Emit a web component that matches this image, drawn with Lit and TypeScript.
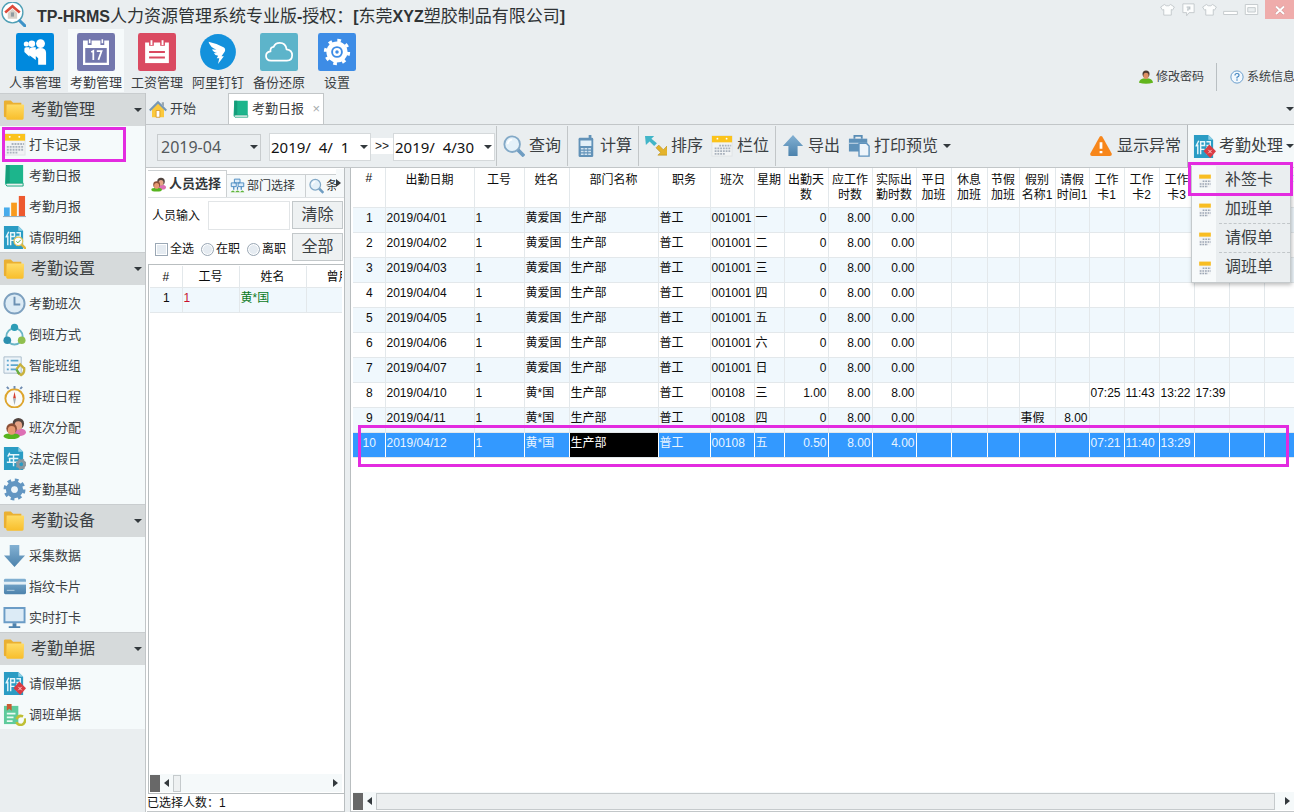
import { LitElement, html, css, svg, nothing } from "lit";
import { customElement, state, property } from "lit/decorators.js";
import { classMap } from "lit/directives/class-map.js";

const calendar = svg`
  <rect x="1" y="1" width="22" height="22" fill="#f1f3f4" stroke="#dfe3e5"/>
  <rect x="1" y="1" width="22" height="7" fill="#fbc31b"/>
  <circle cx="7" cy="4" r="1" fill="#fff"/><circle cx="17" cy="4" r="1" fill="#fff"/>
  <path d="M9 11.5h13M4 14.500h18M4 17.500h18M4 20.500h11" stroke="#a9b2bd" stroke-width="2" stroke-dasharray="2 1"/>`;

const paper = svg`
  <path d="M1 0h15l5 5v19H1z" fill="#2a9cc4"/><path d="M16 0l5 5h-5z" fill="#8fd0e6"/>`;

const holiday = svg`
  <path d="M6 6L3 12M5 10v10M8 7h4v4H8zM8 11v9M8 15h4M14 7h4v4h-4M14 13h4l-4 7M14 14l4 6" stroke="#e6f6fb" stroke-width="1.500" fill="none"/>`;

const people = svg`
  <ellipse cx="17" cy="17" rx="7" ry="4" fill="#dd6fb4"/>
  <circle cx="16" cy="8" r="6" fill="#51443f"/><ellipse cx="16" cy="10" rx="4" ry="4.500" fill="#e6a487"/>
  <ellipse cx="9" cy="21" rx="8.500" ry="3" fill="#57b41f"/>
  <circle cx="9" cy="13" r="5.500" fill="#8b4f36"/><ellipse cx="9" cy="15" rx="4" ry="4.500" fill="#e79a72"/>`;

const icons: Record<string, unknown> = {
  logo: svg`
    <circle cx="11" cy="10" r="10" fill="#fff" stroke="#4f9fb5" stroke-width="1.300"/>
    <path d="M18 18l5 5" stroke="#3e93c8" stroke-width="3" stroke-linecap="round"/>
    <path d="M4 10l7-6 7 6" fill="none" stroke="#dd4a3a" stroke-width="2.500"/>
    <path d="M6.500 10.500l4.500-4 4.500 4V16h-9z" fill="#d7d1c8"/><path d="M9.500 10h3v4h-3z" fill="#8f9aa0"/>`,
  staff: svg`
    <rect width="24" height="24" rx="1.500" fill="#0089dd"/>
    <g fill="#fff"><circle cx="6.500" cy="7" r="1.600"/><circle cx="10" cy="6.800" r="2.100"/><circle cx="15.500" cy="6.700" r="2.800"/>
    <path d="M5.300 10q0-1 1.200-1h2v6l-3.200-3zM8.500 11q0-2 2-2h2v8l-4-3zM12.300 12q0-2.500 3-2.500 3.700 0 3.700 3V20h-5v-4l-1.700-1.600z"/></g>`,
  attendance: svg`
    <rect width="24" height="24" rx="1.500" fill="#7377ad"/>
    <path d="M4.500 5.500h15v14h-15z" fill="none" stroke="#fff" stroke-width="1.400"/>
    <path d="M4.500 5.500h15v4h-15z" fill="#fff"/>
    <path d="M8 4v3.500M16 4v3.500" stroke="#7377ad" stroke-width="2.400"/><path d="M8 4v2.500M16 4v2.500" stroke="#fff"/>
    <path d="M9 12l1.300-.700V17M12.500 11.500h3L13.500 17" stroke="#fff" fill="none" stroke-width="1.100"/>`,
  payroll: svg`
    <rect width="24" height="24" rx="1.500" fill="#da4a61"/>
    <path d="M4.500 6h15v13h-15z" fill="#fff"/>
    <path d="M8.500 4v4M15.500 4v4" stroke="#da4a61" stroke-width="3"/>
    <path d="M8.500 4.500v3M15.500 4.500v3" stroke="#fff" stroke-width="1.200"/>
    <path d="M7 12h10M7 15.500h10" stroke="#da4a61" stroke-width="1.200"/>`,
  ding: svg`
    <circle cx="12" cy="12" r="11.300" fill="#1391dc"/>
    <path d="M6 5.500q5 1 9.500 3.500 1.500 1 .8 2.700l-2.100 3h1.500l-3.700 4.800.8-3.500h-1.600l.9-1.600q-2-.2-2.700-1.600l2-.1q-2.700-.8-3.100-2.500l2.700.3Q7 9 6 5.500z" fill="#fff"/>`,
  backup: svg`
    <rect width="24" height="24" rx="1.500" fill="#5db4ca"/>
    <path d="M7 17.500q-3.200-.2-3.200-3 0-2.500 2.800-2.900-.2-2.600 2-2.800Q9.700 6.300 12.500 6.300q3.700 0 4.300 4 3.500.4 3.500 3.700 0 3.300-3.300 3.500z" fill="none" stroke="#fff" stroke-width="1.100"/>`,
  settings: svg`
    <rect width="24" height="24" rx="1.500" fill="#3d8ce6"/>
    <circle cx="12" cy="12" r="6.700" fill="#fff"/>
    <circle cx="12" cy="12" r="7.300" fill="none" stroke="#fff" stroke-width="2" stroke-dasharray="2.300 3.430"/>
    <circle cx="12" cy="12" r="3.100" fill="none" stroke="#3d8ce6" stroke-width="1.200"/><circle cx="12" cy="12" r="1.100" fill="#3d8ce6"/>`,
  folder: svg`
    <path d="M1 3q0-1.500 1.500-1.500h6L11 4h9v16H2.500Q1 20 1 18.500z" fill="#eab032"/>
    <path d="M4 6h18q1 0 1 1l-.5 14q0 1.500-1.500 1.500H5Q3.500 22.500 3.500 21z" fill="url(#gold)"/>`,
  home: svg`
    <path d="M4 12l8-8 8 8v11H4z" fill="#fbc93d"/><path d="M1 14L12 3l11 11" fill="none" stroke="#7898b5" stroke-width="3"/>
    <path d="M17 3h3v6l-3-3z" fill="#9aa7b1"/><path d="M9.500 14h5v9h-5z" fill="#fff" stroke="#d18d18"/>`,
  calendar,
  date: svg`
    <path d="M2 2h20v21H2z" fill="#f1f3f4"/><path d="M2 1h20v7H2z" fill="#f8bd22"/>
    <path d="M8 12.500h14M3 17h19M3 21.500h14" stroke="#9da7b5" stroke-width="2.500" stroke-dasharray="3 1.500"/>`,
  book: svg`
    <path d="M3 1h18v19H5q-3 0-3 2z" fill="#1cb58c"/><path d="M3 1h4v19l-4 1z" fill="#149d7a"/>
    <path d="M4 20h17v3H4q-2-1.500 0-3z" fill="#e8f2ee" stroke="#18a47e"/>`,
  chart: svg`
    <path d="M1 13h6v9H1z" fill="#48aceb"/><path d="M8.500 8h6v14h-6z" fill="#f99a1d"/><path d="M16.500 1H23v21h-6.500z" fill="#ed592e"/>
    <path d="M0 22.500h24" stroke="#8fa6b5"/>`,
  leave: svg`${paper}${holiday}
    <circle cx="16" cy="16" r="4.500" fill="#fff" stroke="#e3c45a" stroke-width="1.300"/><path d="M14 16l1.500 1.500 3-3" stroke="#4cae4c" fill="none"/><path d="M19.500 19.500L24 24" stroke="#dfb83d" stroke-width="2.500"/>`,
  clock: svg`
    <circle cx="12" cy="12" r="10.500" fill="#dcebf5" stroke="#7da0bf" stroke-width="2"/><path d="M12 5v8h6" fill="none" stroke="#6c91b3" stroke-width="2"/>`,
  cycle: svg`
    <circle cx="12" cy="14" r="8.500" fill="none" stroke="#69b5c6" stroke-width="2"/>
    <circle cx="12" cy="4.500" r="3.800" fill="#2c9cb6"/><circle cx="4.500" cy="18" r="4" fill="#2c8fae"/><circle cx="19.500" cy="18" r="4" fill="#8fbf4f"/>`,
  group: svg`
    <path d="M1 3h18v17H1z" fill="#edf4f9" stroke="#a9bccb"/><path d="M4 7h2M4 11.500h2M4 16h2M8 7h8M8 11.500h8M8 16h6" stroke="#5ea6cf" stroke-width="1.800"/>
    <path d="M14 16l4-5 4 4M22 14q1 6-3 8l-4-3" fill="none" stroke="#c8b23e" stroke-width="2.400"/><path d="M14 16l3 5" stroke="#67ad45" stroke-width="2.400"/>`,
  compass: svg`
    <circle cx="12" cy="14" r="9.500" fill="#f9fafa" stroke="#dda52d" stroke-width="2"/><path d="M12 1v3M4 2l2 2M20 2l-2 2" stroke="#6e8bb0" stroke-width="2"/>
    <path d="M12 7l1.500 7h-3z" fill="#d53c2f"/><path d="M12 21l1.500-7h-3z" fill="#a5aeb5"/>`,
  people,
  year: svg`${paper}
    <path d="M7 6l-2 4M6 8h11M6 12h10M4 16h14M11 8v12M7 12v4" stroke="#e6f6fb" stroke-width="1.500" fill="none"/>
    <circle cx="19" cy="18" r="3.500" fill="none" stroke="#8b979e" stroke-width="3"/><circle cx="19" cy="18" r="5" fill="none" stroke="#8b979e" stroke-width="1.500" stroke-dasharray="2 2"/>`,
  gear: svg`
    <circle cx="12" cy="12" r="6" fill="none" stroke="#6296c2" stroke-width="6"/>
    <circle cx="12" cy="12" r="9.700" fill="none" stroke="#6296c2" stroke-width="3.500" stroke-dasharray="3.800 3.820"/><circle cx="12" cy="12" r="3.500" fill="#edf5fa"/>`,
  down: svg`<path d="M7 1h10v11h6L12 24 1 12h6z" fill="url(#steel)"/>`,
  up: svg`<path d="M7 23h10V12h6L12 0 1 12h6z" fill="url(#steel)"/>`,
  card: svg`
    <rect x="1" y="4" width="23" height="16" rx="1.500" fill="url(#steel)"/><path d="M1 7h23v3H1z" fill="#e4eff6"/><path d="M4 16h8" stroke="#b5d0e2"/>`,
  monitor: svg`
    <path d="M1.500 2h21v15h-21z" fill="#dcebf6" stroke="#6b9cc6" stroke-width="2"/><path d="M10 18h4v3h4v2H6v-2h4z" fill="#4f83ae"/>`,
  leaveForm: svg`${paper}${holiday}
    <path d="M17 10l7 7-6 7-7-7z" fill="#da3b43"/><path d="M16 15.500l3.500 3.500M19.500 15.500L16 19" stroke="#fbd5d6"/>`,
  shiftForm: svg`
    <path d="M1 3h15v19H1z" fill="#5ecb9c"/><path d="M4 1h5v7L6.500 6 4 8z" fill="#c95b31"/><path d="M4 11h9M4 15h7M4 19h6" stroke="#e9fbf2" stroke-width="1.800"/>
    <path d="M14 17q2-5 7-3M23 16q1 5-4 7-4 0-5-3" fill="none" stroke="#bfbf35" stroke-width="2.600"/>`,
  search: svg`
    <path d="M16 16l7 7" stroke="#6f9dc2" stroke-width="4"/><circle cx="10" cy="10" r="8.500" fill="#e4f1f9" stroke="#83a9c7" stroke-width="2"/>
    <path d="M5 10q1-5 5-5" stroke="#fff" stroke-width="2" fill="none"/>`,
  phone: svg`
    <rect x="5" y="3" width="16" height="21" rx="1.500" fill="#6292b8"/><path d="M16 0h3v4h-3z" fill="#6292b8"/><path d="M7 6h12v6H7z" fill="#e3f0f8"/>
    <path d="M7.500 15h12M7.500 18h12M7.500 21h12" stroke="#d2e3ef" stroke-width="1.500" stroke-dasharray="3 1"/>`,
  sort: svg`
    <path d="M0 1h10L7 4l6 5-3 3-5-5-4 4z" fill="#42b5c8"/><path d="M25 22H14l3-3-5-5 3-3 5 5 4-4z" fill="#e4b32b" stroke="#b38b1d" stroke-width=".6"/>`,
  print: svg`
    <path d="M7 4V1h8v3" fill="none" stroke="#5a8db5" stroke-width="2"/><path d="M1 4h20v14H1z" fill="#5e91b9"/><path d="M1 9h20" stroke="#d5e4ef"/>
    <path d="M12 9h8l3 3v11H12z" fill="#eef5fb" stroke="#5f93be" stroke-width="1.500"/>`,
  warn: svg`
    <path d="M10.500 2q1.500-2 3 0l10 18q1 3-2 3h-19q-3 0-2-3z" fill="#f7861b"/><path d="M12 8v7M12 17.500v2.500" stroke="#fff" stroke-width="3"/>`,
  depart: svg`
    <path d="M7 1h9v6H7zM2 7h8v6H2zM13 7h9v6h-9z" fill="#dcebf8" stroke="#4c8bc1" stroke-width="1.500"/>
    <path d="M6 13v5M12 13v5M18 13v5" stroke="#4c8bc1" stroke-width="2"/><path d="M1 22q4-6 7 0zM8 22q4-6 8 0zM16 22q4-6 7 0z" fill="#5db53a"/>`,
  user: svg`
    <path d="M0 22q0-8 12-8t12 8q-12 3-24 0z" fill="#62b51c"/><circle cx="12" cy="7" r="6" fill="#4d3a31"/><ellipse cx="12" cy="10" rx="4.500" ry="5.500" fill="#dd9064"/>`,
  help: svg`
    <circle cx="12" cy="12" r="10.500" fill="#f2f8fd" stroke="#5a94c8" stroke-width="1.500"/><path d="M8.500 9.500q0-3.500 3.500-3.500t3.500 3q0 2-3.500 3.500v2M12 16v2.500" fill="none" stroke="#4485bf" stroke-width="2"/>`,
  shirt: svg`<path d="M7 4l3 2h4l3-2 6 4-3 5-2-1v9H6v-9l-2 1-3-5z" fill="#fcfdfd" stroke="#c3c9cc" stroke-width="1.500"/>`,
  feedback: svg`<path d="M3 3h18v14h-8l-4 5v-5H3z" fill="#fcfdfd" stroke="#c3c9cc" stroke-width="1.500"/><path d="M9 8h5v3h-3v3" fill="none" stroke="#bcc3c7" stroke-width="2"/>`,
  minimize: svg`<path d="M1 15h22v5H1z" fill="#fff" stroke="#c3c9cc" stroke-width="1.500"/>`,
  maximize: svg`<path d="M2 4h20v16H2z" fill="#fcfdfd" stroke="#c3c9cc" stroke-width="1.500"/><path d="M6 9h12v7H6z" fill="#eaeef0" stroke="#c3c9cc" stroke-width="1.500"/>`,
  close: svg`<path d="M4 5l16 15M20 5L4 20" stroke="#c98f8f" stroke-width="6"/><path d="M4 5l16 15M20 5L4 20" stroke="#fff" stroke-width="4"/>`,
};

@customElement("hr-icon")
class HrIcon extends LitElement {
  @property() name = "";
  static styles = css`
    :host { display: inline-block; flex: none; width: 24px; height: 24px; }
    svg { display: block; width: 100%; height: 100%; }
  `;
  render() {
    return html`<svg viewBox="0 0 24 24" aria-hidden="true">
      <defs>
        <linearGradient id="gold" x2="0" y2="1"><stop stop-color="#ffdc66"/><stop offset="1" stop-color="#f8be2b"/></linearGradient>
        <linearGradient id="steel" x2="0" y2="1"><stop stop-color="#83b1d3"/><stop offset="1" stop-color="#4c82ac"/></linearGradient>
      </defs>${icons[this.name]}</svg>`;
  }
}

const groups = [
  { name: "考勤管理", items: [["calendar", "打卡记录"], ["book", "考勤日报"], ["chart", "考勤月报"], ["leave", "请假明细"]] },
  { name: "考勤设置", items: [["clock", "考勤班次"], ["cycle", "倒班方式"], ["group", "智能班组"], ["compass", "排班日程"], ["people", "班次分配"], ["year", "法定假日"], ["gear", "考勤基础"]] },
  { name: "考勤设备", items: [["down", "采集数据"], ["card", "指纹卡片"], ["monitor", "实时打卡"]] },
  { name: "考勤单据", items: [["leaveForm", "请假单据"], ["shiftForm", "调班单据"]] },
];

const ribbon = [["staff", "人事管理"], ["attendance", "考勤管理"], ["payroll", "工资管理"], ["ding", "阿里钉钉"], ["backup", "备份还原"], ["settings", "设置"]];

const columns: [string, number][] = [
  ["#", 32], ["出勤日期", 89], ["工号", 50], ["姓名", 45], ["部门名称", 89], ["职务", 52], ["班次", 44], ["星期", 30],
  ["出勤天数", 44], ["应工作时数", 44], ["实际出勤时数", 44], ["平日加班", 35], ["休息加班", 36], ["节假加班", 32],
  ["假别名称1", 36], ["请假时间1", 34], ["工作卡1", 35], ["工作卡2", 35], ["工作卡3", 35], ["工作卡4", 35], ["工作卡5", 35], ["工作卡6", 35],
];

const day = (n: number, date: string, name: string, shift: string, week: string, days: string, hours: string, ...rest: string[]) =>
  [String(n), date, "1", name, "生产部", "普工", shift, week, days, "8.00", hours, "", "", "", ...rest];

const rows = [
  ...["一", "二", "三", "四", "五", "六", "日"].map((w, i) => day(i + 1, `2019/04/0${i + 1}`, "黄爱国", "001001", w, "0", "0.00")),
  day(8, "2019/04/10", "黄*国", "00108", "三", "1.00", "8.00", "", "", "07:25", "11:43", "13:22", "17:39"),
  day(9, "2019/04/11", "黄*国", "00108", "四", "0", "0.00", "事假", "8.00"),
  day(10, "2019/04/12", "黄*国", "00108", "五", "0.50", "4.00", "", "", "07:21", "11:40", "13:29"),
];

const numeric = new Set([8, 9, 10, 15]);

@customElement("app-root")
class AppRoot extends LitElement {
  @state() private selected = 9;
  @state() private menuOpen = true;

  static styles = css`
    :host {
      display: flex; flex-direction: column; height: 100vh; min-height: 760px; overflow: hidden;
      background: #eaeef0; color: #3b4043;
      font: 12px/16px "Liberation Sans", "Noto Sans CJK SC", sans-serif;
    }
    * { box-sizing: border-box; }
    button, input, select { font: inherit; color: inherit; margin: 0; border-radius: 0; }
    button { border: 0; padding: 0; background: none; display: flex; align-items: center; white-space: nowrap; }
    .arrow { flex: none; border: 4px solid transparent; border-top-color: #33393d; border-bottom: 0; }
    .mark { position: absolute; border: 3px solid #e32be0; pointer-events: none; z-index: 3; }

    .titlebar { display: flex; align-items: center; height: 29px; padding-left: 1px; gap: 11px; }
    .titlebar hr-icon { width: 25px; height: 25px; }
    .title { flex: 1; margin: 0; padding-top: 4px; font-size: 17px; line-height: 24px; font-weight: 400; color: #2f3335; }
    .title b { font-size: 16px; }
    .window { display: flex; align-self: flex-start; gap: 6px; }
    .window button { height: 19px; }
    .window hr-icon { width: 15px; height: 15px; }
    .window .close { width: 29px; justify-content: center; background: #efacab; }
    .window .close hr-icon { width: 12px; height: 12px; }

    .ribbon { display: flex; align-items: flex-start; height: 64px; padding-left: 7px; gap: 5px; }
    .ribbon .app { flex-direction: column; width: 56px; height: 63px; padding-top: 4px; gap: 4px; font-size: 13px; }
    .ribbon .app:nth-child(6) { width: 50px; }
    .ribbon .app hr-icon { width: 38px; height: 38px; }
    .ribbon .current { background: #f6fafb; }
    .account { display: flex; margin-left: auto; padding-top: 34px; width: 155px; overflow: hidden; }
    .account button { flex: none; height: 28px; gap: 3px; }
    .account button + button { margin-left: 12px; padding-left: 13px; border-left: 1px solid #b9bfc2; }
    .account hr-icon { width: 14px; height: 14px; }

    .body { flex: 1; display: flex; min-height: 0; }
    .sidebar { flex: none; width: 146px; border-right: 1px solid #c2c6c8; }
    .group { width: 100%; height: 33px; padding: 0 3px; gap: 6px; background: #d6dadb; font-size: 16px; border-top: 1px solid #c9cdcf; }
    .group hr-icon { width: 22px; height: 22px; }
    .group .arrow { margin-left: auto; }
    .items { list-style: none; margin: 0; padding: 2px 0 0; background: #f5fafb; }
    .items li { position: relative; height: 31px; padding-top: 2px; }
    .items button { width: 100%; height: 29px; padding-left: 3px; gap: 3px; font-size: 13px; }
    .items hr-icon { width: 23px; height: 23px; }
    .items .mark { inset: -1px 19px -3px 2px; }

    .main { flex: 1; min-width: 0; display: flex; flex-direction: column; }
    .tabs { display: flex; align-items: flex-end; height: 32px; padding-left: 3px; border-bottom: 1px solid #c2c6c8; font-size: 13px; }
    .tabs button { height: 31px; gap: 3px; }
    .tabs .start { width: 79px; }
    .tabs hr-icon { width: 18px; height: 18px; }
    .tabs .open { width: 96px; padding: 0 3px; gap: 2px; background: #fff; border: 1px solid #c2c6c8; border-bottom: 0; }
    .tabs .x { margin-left: auto; color: #a6abad; }
    .tabs .more { margin-left: auto; }

    .toolbar { display: flex; flex: none; align-items: center; height: 43px; padding-left: 11px; border-bottom: 1px solid #c2c6c8; font-size: 16px; white-space: nowrap; }
    .toolbar button { flex: none; height: 40px; }
    .toolbar .tool { gap: 4px; padding: 0 6px; }
    .toolbar .tool hr-icon { width: 22px; height: 22px; }
    .toolbar .first { border-left: 1px solid #c2c6c8; }
    .toolbar .tight { padding-left: 2px; }
    .tight .arrow { margin-left: 1px; }
    .toolbar .warn { margin-left: auto; }
    .toolbar .warn hr-icon { width: 24px; }
    .month { appearance: none; width: 104px; height: 27px; padding: 0 3px; border: 1px solid #c8ccce; background: #eaeef0; font-family: "Noto Sans", sans-serif; color: #54595c; }
    .pick { position: relative; display: flex; align-items: center; flex: none; padding-top: 2px; }
    .pick .arrow { position: absolute; right: 3px; pointer-events: none; }
    .date { width: 102px; height: 28px; padding: 0 1px; border: 1px solid #d5d9db; background: #fff; font: 15px "Noto Sans", sans-serif; color: #111; }
    .pick + .pick { margin-left: 8px; }
    .to { flex: none; width: 22px; background: #fff; color: #222; font-size: 12px; line-height: 16px; text-align: center; }
    .end { margin-right: 1px; }
    .process { position: relative; flex: none; width: 107px; height: 42px; border-left: 1px solid #b5babd; background: #f4f8f9; }
    .process .tool { width: 106px; height: 42px; overflow: hidden; padding: 0 0 0 5px; gap: 3px; }
    .process .tool hr-icon { width: 23px; height: 23px; }
    .menu { position: absolute; left: 3px; top: 41px; width: 100px; z-index: 2; margin: 0; padding: 0 0 0; list-style: none; border: 1px solid #c5cacc; border-top: 0; background: linear-gradient(90deg, #f7fafb 24px, #eaeef0 24px); box-shadow: 1px 2px 4px rgba(0, 0, 0, 0.25); }
    .menu li { position: relative; height: 29px; display: flex; }
    .menu li button { width: 100%; height: 29px; padding-left: 6px; }
    .menu hr-icon { width: 14px; height: 14px; }
    .menu span { flex: 1; margin-left: 7px; padding-left: 6px; height: 29px; line-height: 27px; text-align: left; }
    .menu li:nth-child(2) span, .menu li:nth-child(3) span { border-bottom: 1px dashed #c2c7ca; }
    .menu .mark { inset: -4px -3px -1px -4px; }

    .work { flex: 1; display: flex; min-height: 0; gap: 5px; background: #eaeef0; }
    .picker { flex: none; width: 199px; display: flex; flex-direction: column; padding-left: 2px; border-right: 1px solid #b9bec0; background: #fff; color: #111; }
    .ptabs { display: flex; flex: none; align-items: flex-end; height: 30px; border-bottom: 1px solid #dde1e3; overflow: hidden; }
    .ptabs button { flex: none; width: 79px; height: 23px; gap: 2px; padding-left: 3px; border: 1px solid #ccd0d2; border-left: 0; border-bottom: 0; color: #33383b; background: #f6f9fa; }
    .ptabs .on { height: 27px; font-size: 13px; font-weight: 700; background: #fff; gap: 3px; }
    .ptabs hr-icon { width: 15px; height: 16px; }
    .ptabs .third { flex: 1; width: 30px; overflow: hidden; border-right: 0; }
    .ptabs .next { width: 8px; height: 28px; padding: 0; border: 0; }
    .side-arrow { border: 4px solid transparent; border-left: 5px solid #33393d; border-right: 0; }
    .back { border-left: 0; border-right: 5px solid #33393d; }
    .filter { display: grid; grid-template-columns: minmax(0, 1fr) 51px; gap: 3px 2px; padding: 3px 1px 3px 4px; }
    .filter label { display: flex; align-items: center; white-space: nowrap; }
    .filter .who { gap: 8px; }
    .filter .who input { flex: 1; width: 0; min-width: 0; height: 29px; border: 1px solid #e2e5e7; background: #fff; }
    .filter button { height: 28px; justify-content: center; border: 1px solid #c3c8ca; background: #eef1f2; font-size: 16px; color: #3b4043; }
    .scope { display: flex; justify-content: space-between; padding: 4px 4px 0 3px; }
    .scope label { gap: 2px; }
    .scope input { appearance: none; flex: none; width: 13px; height: 13px; border: 1px solid #9ba8b5; background: #e5ebf1; box-shadow: inset 0 0 0 1px #fff; }
    .scope [type="radio"] { border-radius: 50%; }

    .box { flex: 1; display: flex; flex-direction: column; min-height: 0; border: 1px solid #b9bec0; border-right: 0; overflow: hidden; padding: 1px 2px 1px 1px; }
    .sheet { flex: 1; position: relative; overflow: hidden; }
    table { table-layout: fixed; border-collapse: collapse; color: #0c0c0c; }
    th, td { padding: 1px 0 4px 1px; height: 25px; border-right: 1px solid #e3e8eb; border-bottom: 1px solid #e3e8eb; overflow: hidden; white-space: nowrap; text-align: left; font-weight: 400; line-height: 18px; vertical-align: top; }
    th { padding: 3px 0 0; text-align: center; line-height: 16px; }
    tbody tr:nth-child(odd) td { background: #f0f8fd; }
    td.num { text-align: right; padding-right: 1px; }
    td:first-child { text-align: center; }
    .small { width: 221px; }
    .small th { height: 21px; }
    .red { color: #c8102e; }
    .green { color: #0a7a1c; }
    .scroll { flex: none; display: flex; align-items: center; height: 18px; background: #f5f9fa; }
    .scroll .grip { width: 10px; height: 17px; background: #686868; }
    .scroll button { width: 13px; height: 17px; justify-content: center; }
    .scroll .thumb { width: 8px; height: 17px; border: 1px solid #c5cacc; background: #eef1f2; }
    .scroll .fwd { margin-left: auto; }
    .count { height: 18px; line-height: 19px; flex: none; margin: 0 0 0 -1px; border-bottom: 1px solid #c2c6c8; }

    .report { flex: 1; min-width: 0; display: flex; flex-direction: column; padding: 0 0 1px 2px; background: #fff; border-left: 1px solid #b9bec0; border-bottom: 1px solid #c2c6c8; }
    .big { width: 946px; }
    .big th { height: 39px; padding-top: 5px; line-height: 15px; white-space: normal; }
    .big th:first-child { padding-top: 3px; }
    .big tbody .sel td { background: #3399ff; color: #e9f5ff; border-right-color: #fff; }
    .big tbody .sel td:nth-child(5) { background: #000; color: #fff; }
    .sheet > .mark { left: 5px; right: 5px; top: 257px; height: 42px; }
    .report .thumb { flex: 1; background: #eceff0; }
    .report .fwd { width: 19px; padding-left: 6px; }
  `;

  private bar() {
    return html`<div class="scroll">
      <span class="grip"></span>
      <button aria-label="向左"><i class="side-arrow back"></i></button>
      <span class="thumb"></span>
      <button class="fwd" aria-label="向右"><i class="side-arrow"></i></button>
    </div>`;
  }

  private tool(icon: string, text: string, cls = "") {
    return html`<button class="tool ${cls}"><hr-icon name=${icon}></hr-icon>${text}</button>`;
  }

  private header() {
    return html`
      <header class="titlebar">
        <hr-icon name="logo"></hr-icon>
        <h1 class="title"><b>TP-HRMS</b>人力资源管理系统专业版<b>-</b>授权：<b>[</b>东莞<b>XYZ</b>塑胶制品有限公司<b>]</b></h1>
        <div class="window">
          ${[["shirt", "皮肤"], ["feedback", "反馈"], ["shirt", "主题"], ["minimize", "最小化"], ["maximize", "最大化"]].map(
            ([i, l]) => html`<button aria-label=${l}><hr-icon name=${i}></hr-icon></button>`)}
          <button class="close" aria-label="关闭"><hr-icon name="close"></hr-icon></button>
        </div>
      </header>
      <nav class="ribbon">
        ${ribbon.map(([i, l]) => html`<button class=${classMap({ app: true, current: i === "attendance" })}><hr-icon name=${i}></hr-icon>${l}</button>`)}
        <div class="account">
          <button><hr-icon name="user"></hr-icon>修改密码</button>
          <button><hr-icon name="help"></hr-icon>系统信息</button>
        </div>
      </nav>`;
  }

  private toolbar() {
    return html`<div class="toolbar">
      <div class="pick"><select class="month" aria-label="月份"><option>2019-04</option></select><i class="arrow"></i></div>
      <div class="pick"><input class="date" aria-label="开始日期" .value=${"2019/  4/  1"}><i class="arrow"></i></div>
      <span class="to">&gt;&gt;</span>
      <div class="pick end"><input class="date" aria-label="结束日期" .value=${"2019/  4/30"}><i class="arrow"></i></div>
      ${this.tool("search", "查询", "first")}
      ${this.tool("phone", "计算", "first")}
      ${this.tool("sort", "排序", "first")}
      ${this.tool("calendar", "栏位", "tight")}
      ${this.tool("up", "导出", "first")}
      <button class="tool tight"><hr-icon name="print"></hr-icon>打印预览<i class="arrow"></i></button>
      ${this.tool("warn", "显示异常", "warn")}
      <div class="process">
        <button class="tool" aria-expanded=${this.menuOpen} @click=${() => (this.menuOpen = !this.menuOpen)}>
          <hr-icon name="leaveForm"></hr-icon>考勤处理<i class="arrow"></i>
        </button>
        ${this.menuOpen ? html`<ul class="menu">
          ${["补签卡", "加班单", "请假单", "调班单"].map((t, n) => html`<li>
            <button><hr-icon name="date"></hr-icon><span>${t}</span></button>${n === 0 ? html`<div class="mark"></div>` : nothing}
          </li>`)}
        </ul>` : nothing}
      </div>
    </div>`;
  }

  private picker() {
    return html`<section class="picker">
      <div class="ptabs">
        <button class="on"><hr-icon name="people"></hr-icon>人员选择</button>
        <button><hr-icon name="depart"></hr-icon>部门选择</button>
        <button class="third"><hr-icon name="search"></hr-icon>条件</button>
        <button class="next" aria-label="更多"><i class="side-arrow"></i></button>
      </div>
      <div class="filter">
        <label class="who">人员输入<input type="text"></label>
        <button>清除</button>
        <div class="scope">
          <label><input type="checkbox">全选</label>
          <label><input type="radio" name="job">在职</label>
          <label><input type="radio" name="job">离职</label>
        </div>
        <button>全部</button>
      </div>
      <div class="box">
        <div class="sheet">
          <table class="small">
            <colgroup>${[32, 57, 67, 65].map((w) => html`<col style="width:${w}px">`)}</colgroup>
            <thead><tr><th>#</th><th>工号</th><th>姓名</th><th>曾用</th></tr></thead>
            <tbody><tr><td>1</td><td class="red">1</td><td class="green">黄*国</td><td></td></tr></tbody>
          </table>
        </div>
        ${this.bar()}
      </div>
      <p class="count">已选择人数：1</p>
    </section>`;
  }

  private report() {
    return html`<section class="report">
      <div class="sheet">
        <table class="big">
          <colgroup>${columns.map(([, w]) => html`<col style="width:${w}px">`)}</colgroup>
          <thead><tr>${columns.map(([t]) => html`<th>${t}</th>`)}</tr></thead>
          <tbody>${rows.map((r, n) => html`<tr class=${classMap({ sel: n === this.selected })} @click=${() => (this.selected = n)}>
            ${columns.map((_, c) => html`<td class=${classMap({ num: numeric.has(c) })}>${r[c] ?? ""}</td>`)}
          </tr>`)}</tbody>
        </table>
        <div class="mark"></div>
      </div>
      ${this.bar()}
    </section>`;
  }

  render() {
    return html`
      ${this.header()}
      <div class="body">
        <nav class="sidebar">
          ${groups.map((g, n) => html`
            <button class="group"><hr-icon name="folder"></hr-icon>${g.name}<i class="arrow"></i></button>
            <ul class="items">
              ${g.items.map(([i, l], k) => html`<li><button><hr-icon name=${i}></hr-icon>${l}</button>${n + k === 0 ? html`<div class="mark"></div>` : nothing}</li>`)}
            </ul>`)}
        </nav>
        <main class="main">
          <div class="tabs">
            <button class="start"><hr-icon name="home"></hr-icon>开始</button>
            <button class="open"><hr-icon name="book"></hr-icon>考勤日报<span class="x">×</span></button>
            <button class="more" aria-label="更多标签"><i class="arrow"></i></button>
          </div>
          ${this.toolbar()}
          <div class="work">${this.picker()}${this.report()}</div>
        </main>
      </div>`;
  }
}
